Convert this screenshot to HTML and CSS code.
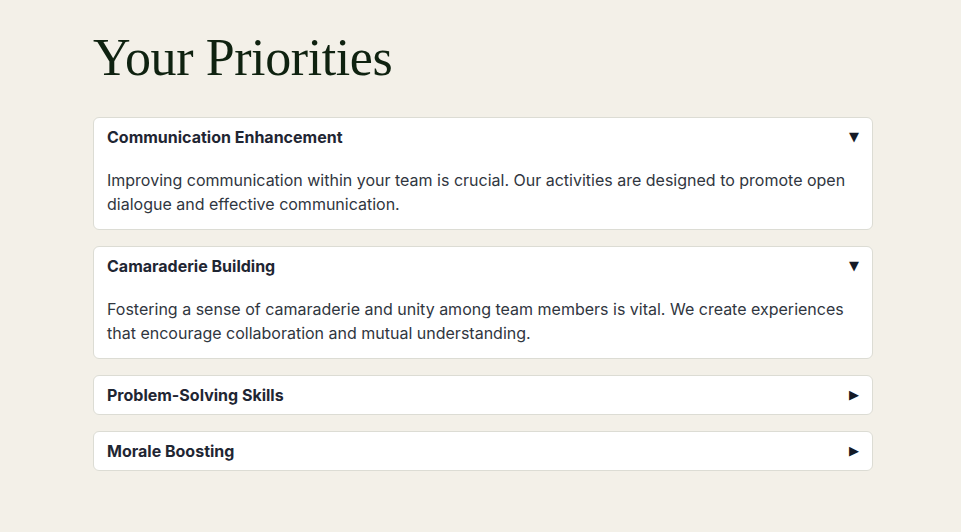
FILE: index.html
```
<!DOCTYPE html>
<html lang="en">
<head>
<meta charset="utf-8">
<title>Your Priorities</title>
<link rel="stylesheet" href="styles.css">
</head>
<body>
<main class="page">
  <h1 class="title">Your Priorities</h1>
  <div class="list">
    <details class="item" open>
      <summary class="item-head"><span class="item-title">Communication Enhancement</span><span class="marker">▼</span></summary>
      <p class="item-body">Improving communication within your team is crucial. Our activities are designed to promote open dialogue and effective communication.</p>
    </details>
    <details class="item" open>
      <summary class="item-head"><span class="item-title">Camaraderie Building</span><span class="marker">▼</span></summary>
      <p class="item-body">Fostering a sense of camaraderie and unity among team members is vital. We create experiences that encourage collaboration and mutual understanding.</p>
    </details>
    <details class="item">
      <summary class="item-head"><span class="item-title">Problem-Solving Skills</span><span class="marker">▶</span></summary>
    </details>
    <details class="item">
      <summary class="item-head"><span class="item-title">Morale Boosting</span><span class="marker">▶</span></summary>
    </details>
  </div>
</main>
</body>
</html>
```

FILE: styles.css
```
html, body {
  margin: 0;
  padding: 0;
  background: #f3f0e8;
}
body {
  font-family: Inter, "Noto Sans", sans-serif;
  color: #2f3440;
}
.page {
  margin: 0 88px 0 93px;
  padding-top: 28px;
}
.title {
  font-family: "Liberation Serif", "Times New Roman", serif;
  font-weight: 400;
  font-size: 52px;
  letter-spacing: -0.4px;
  line-height: 60px;
  color: #0f2210;
  margin: 0 0 29px 0;
}
.list {
  display: flex;
  flex-direction: column;
  gap: 16px;
}
.item {
  background: #ffffff;
  border: 1px solid #dcdcd4;
  border-radius: 6px;
}
.item-head {
  list-style: none;
  display: flex;
  justify-content: space-between;
  align-items: center;
  padding: 6.5px 13px 7.5px 13px;
  line-height: 24px;
  cursor: pointer;
}
.item-head::-webkit-details-marker { display: none; }
.item-title {
  font-size: 16px;
  font-weight: 700;
  color: #1f2633;
}
.marker {
  font-size: 13px;
  color: #141a26;
  font-family: "DejaVu Sans", sans-serif;
}
.item-body {
  margin: 12px 0 0 0;
  padding: 0 13px 13px 13px;
  font-size: 16px;
  line-height: 24px;
  color: #303640;
}
```
